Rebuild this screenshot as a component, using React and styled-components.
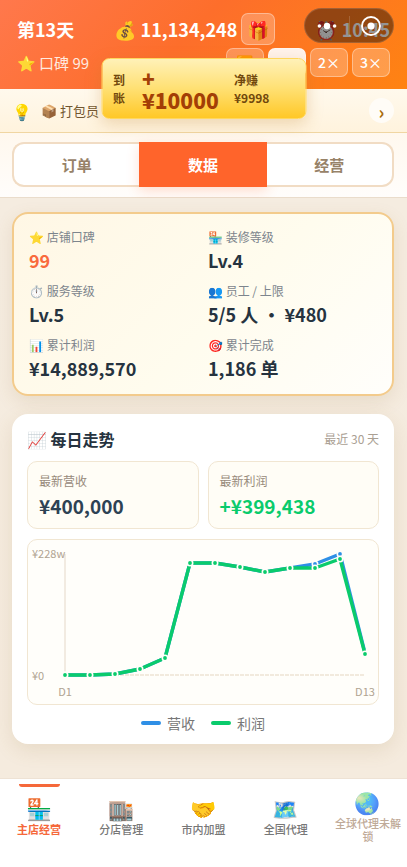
import React from "react";
import styled, { createGlobalStyle, css } from "styled-components";

const GlobalStyle = createGlobalStyle`
  *, *::before, *::after { box-sizing: border-box; }
  body {
    margin: 0;
    background: #f4eadd;
    font-family: "Noto Sans CJK SC", "Noto Color Emoji", sans-serif;
    color: #26333f;
  }
  button { font-family: inherit; margin: 0; cursor: pointer; }
  h2, p, dl, dd, dt { margin: 0; }
`;

const Screen = styled.div`
  position: relative;
  display: flex;
  flex-direction: column;
  min-height: 100vh;
`;

const Header = styled.header`
  display: flex;
  flex-direction: column;
  gap: 3px;
  padding: 13px 17px;
  color: #fff;
  background: linear-gradient(135deg, #ff784c 0%, #fd6e2b 45%, #ff8312 100%);
`;

const HeaderRow = styled.div`
  display: flex;
  align-items: center;
  justify-content: space-between;
  height: ${(p) => (p.$compact ? 28 : 32)}px;
`;

const Day = styled.strong`
  font-size: 18px;
  font-weight: 700;
`;

const Money = styled.div`
  display: flex;
  align-items: center;
  gap: 4px;
  font-size: 18px;
  font-weight: 700;
`;

const Clock = styled.time`
  font-size: 18px;
  font-weight: 700;
`;

const Reputation = styled.span`
  font-size: 15px;
  color: #ffe9df;
`;

const Speeds = styled.div`
  display: flex;
  gap: 4px;
`;

const GlassButton = styled.button`
  display: flex;
  align-items: center;
  justify-content: center;
  width: ${(p) => (p.$square ? 34 : 38)}px;
  height: ${(p) => (p.$square ? 32 : 29)}px;
  padding: 0;
  border: 1px solid rgba(255, 255, 255, 0.35);
  border-radius: 7px;
  background: ${(p) => (p.$active ? "#fff3ec" : "rgba(255, 255, 255, 0.23)")};
  color: ${(p) => (p.$active ? "#ff6b35" : "#fff")};
  font-size: ${(p) => (p.$square ? 18 : 14)}px;
  font-weight: ${(p) => (p.$square ? 700 : 500)};
`;

const Capsule = styled.div`
  position: absolute;
  top: 8px;
  right: 13px;
  display: grid;
  grid-template-columns: 1fr 1px 1fr;
  align-items: center;
  justify-items: center;
  width: 90px;
  height: 35px;
  border: 1px solid rgba(255, 255, 255, 0.14);
  border-radius: 18px;
  background: rgba(0, 0, 0, 0.42);
`;

const CapsuleButton = styled.button`
  display: flex;
  padding: 0;
  border: 0;
  background: none;
`;

const CapsuleDivider = styled.span`
  width: 1px;
  height: 20px;
  background: rgba(255, 255, 255, 0.16);
`;

const Toast = styled.div`
  position: absolute;
  top: 58px;
  left: 50%;
  transform: translateX(-50%);
  display: flex;
  align-items: center;
  gap: 16px;
  width: 205px;
  height: 61px;
  padding: 0 11px;
  border: 1px solid #ffd75e;
  border-radius: 8px;
  background: linear-gradient(180deg, #fff1b8 0%, #ffe073 50%, #ffc827 100%);
  box-shadow: 0 5px 16px rgba(190, 130, 40, 0.28);
  color: #71480c;
  font-weight: 700;
`;

const ToastLabel = styled.span`
  width: 13px;
  font-size: 12px;
  line-height: 18px;
`;

const ToastAmount = styled.strong`
  display: flex;
  flex-direction: column;
  width: 76px;
  color: #a33f06;
  font-size: 21px;
  line-height: 22px;
`;

const ToastNet = styled.span`
  display: flex;
  flex-direction: column;
  font-size: 12px;
  line-height: 18px;
`;

const Notice = styled.div`
  display: flex;
  align-items: center;
  gap: 9px;
  height: 44px;
  padding: 0 13px 0 12px;
  border-bottom: 1px solid #f0d6a2;
  background: linear-gradient(180deg, #fff9ed, #fff3dd);
  color: #715630;
`;

const NoticeIcon = styled.span`
  font-size: 16px;
`;

const NoticeText = styled.span`
  flex: 1;
  font-size: 13px;
`;

const NoticeButton = styled.button`
  display: flex;
  align-items: center;
  justify-content: center;
  width: 25px;
  height: 25px;
  padding: 0;
  border: 0;
  border-radius: 50%;
  background: #fffcf7;
  color: #a96b08;
  font-size: 18px;
  line-height: 24px;
  font-weight: 700;
`;

const TabBar = styled.div`
  padding: 9px 13px 10px 12px;
  border-bottom: 1px solid #eadccb;
  background: linear-gradient(180deg, #fff8ee, #fffdfb);
`;

const TabList = styled.div`
  display: grid;
  grid-template-columns: repeat(3, 1fr);
`;

const Tab = styled.button`
  height: 45px;
  padding: 0;
  border: 2px solid #f1dcc4;
  background: #fff;
  color: #978268;
  font-size: 15px;
  font-weight: 700;
  &:first-child { border-right: 0; border-radius: 12px 0 0 12px; }
  &:last-child { border-left: 0; border-radius: 0 12px 12px 0; }
  ${(p) => p.$active && css`
    border-color: #ff642b;
    background: #ff642b;
    color: #fff;
    box-shadow: 0 4px 12px rgba(255, 100, 43, 0.2);
  `}
`;

const Content = styled.main`
  display: flex;
  flex: 1;
  flex-direction: column;
  gap: 18px;
  padding: 14px 13px 34px 12px;
  background: linear-gradient(180deg, #f5ece0, #f5ebde);
`;

const StatsCard = styled.dl`
  display: grid;
  grid-template-columns: 1fr 1fr;
  gap: 6px 10px;
  padding: 12px 15px;
  border: 2px solid #f3cb8c;
  border-radius: 16px;
  background: linear-gradient(135deg, #fff7e5 0%, #fffcee 55%, #fffefb 100%);
  box-shadow: 0 6px 18px rgba(150, 110, 50, 0.13);
`;

const StatLabel = styled.dt`
  color: #7d858d;
  font-size: 12px;
  line-height: 21px;
`;

const StatValue = styled.dd`
  color: ${(p) => (p.$accent ? "#f96a3c" : "#26333f")};
  font-size: 18px;
  font-weight: 700;
  line-height: 27px;
`;

const TrendCard = styled.section`
  display: flex;
  flex-direction: column;
  gap: 10px;
  padding: 12px 15px 13px;
  border-radius: 16px;
  background: #fff;
  box-shadow: 0 6px 20px rgba(150, 110, 50, 0.14);
`;

const TrendHead = styled.div`
  display: flex;
  align-items: center;
  justify-content: space-between;
  height: 25px;
`;

const TrendTitle = styled.h2`
  font-size: 16px;
  font-weight: 700;
`;

const TrendRange = styled.span`
  color: #aaa093;
  font-size: 12px;
`;

const Figures = styled.div`
  display: grid;
  grid-template-columns: 1fr 1fr;
  gap: 9px;
`;

const Figure = styled.div`
  padding: 9px 11px 8px;
  border: 1px solid #f1e6d2;
  border-radius: 10px;
  background: #fffdf6;
`;

const FigureLabel = styled.p`
  color: #978a7b;
  font-size: 12px;
  line-height: 20px;
`;

const FigureValue = styled.p`
  color: ${(p) => (p.$profit ? "#0acb6c" : "#2d4254")};
  font-size: 19px;
  font-weight: 700;
  line-height: 29px;
`;

const ChartBox = styled.div`
  border: 1px solid #f1e6d2;
  border-radius: 10px;
  background: #fffefa;
`;

const ChartSvg = styled.svg`
  display: block;
  width: 100%;
  text {
    fill: #b0a391;
    font-size: 11px;
  }
`;

const Legend = styled.div`
  display: flex;
  justify-content: center;
  gap: 16px;
  line-height: 16px;
`;

const LegendItem = styled.span`
  display: flex;
  align-items: center;
  gap: 6px;
  color: #777;
  font-size: 14px;
  &::before {
    content: "";
    width: 20px;
    height: 4px;
    border-radius: 2px;
    background: ${(p) => p.$color};
  }
`;

const BottomNav = styled.nav`
  position: sticky;
  bottom: 0;
  overflow: hidden;
  padding: 5px 0 18px;
  border-top: 1px solid #eee2d4;
  background: #fff;
`;

const NavList = styled.div`
  display: grid;
  grid-template-columns: repeat(5, 1fr);
  height: 65px;
  margin: 0 -2px;
`;

const NavItem = styled.button`
  position: relative;
  display: flex;
  flex-direction: column;
  align-items: center;
  justify-content: center;
  min-width: 0;
  padding: 0 6px;
  border: 0;
  background: none;
  color: ${(p) => (p.$active ? "#f5683a" : p.$locked ? "#bfaa98" : "#777")};
  font-size: 11px;
  font-weight: ${(p) => (p.$active ? 700 : 500)};
  line-height: 13px;
  ${(p) => p.$active && css`
    &::before {
      content: "";
      position: absolute;
      top: 0;
      left: 25%;
      width: 50%;
      height: 3px;
      border-radius: 0 0 3px 3px;
      background: #f5683a;
    }
  `}
`;

const NavIcon = styled.span`
  font-family: "Noto Color Emoji", sans-serif;
  font-size: 21px;
  line-height: 26px;
  opacity: ${(p) => (p.$locked ? 0.75 : 1)};
`;

const STATS = [
  { label: "⭐ 店铺口碑", value: "99", accent: true },
  { label: "🏪 装修等级", value: "Lv.4" },
  { label: "⏱️ 服务等级", value: "Lv.5" },
  { label: "👥 员工 / 上限", value: "5/5 人 · ¥480" },
  { label: "📊 累计利润", value: "¥14,889,570" },
  { label: "🎯 累计完成", value: "1,186 单" },
];

const NAV = [
  { icon: "🏪", label: "主店经营", active: true },
  { icon: "🏬", label: "分店管理" },
  { icon: "🤝", label: "市内加盟" },
  { icon: "🗺️", label: "全国代理" },
  { icon: "🌏", label: "全球代理未解锁", locked: true },
];

const PROFIT = [135, 135, 134, 129, 118, 23, 23, 27, 32, 28, 28, 19, 114];
const REVENUE = [135, 135, 134, 129, 118, 23, 23, 27, 32, 28, 24, 14, 113];
const toPoints = (values) => values.map((y, i) => [37 + i * 25, y]);

function Series({ values, color }) {
  const points = toPoints(values);
  return (
    <g>
      <polyline points={points.join(" ")} fill="none" stroke={color} strokeWidth="3.4" strokeLinejoin="round" />
      {points.map(([x, y]) => (
        <circle key={x} cx={x} cy={y} r="2.7" fill={color} stroke="#fffefa" strokeWidth="1.6" />
      ))}
    </g>
  );
}

function TrendChart() {
  return (
    <ChartSvg viewBox="0 0 350 164" role="img" aria-label="每日走势">
      <path d="M37 14V135" stroke="#eee5d8" strokeWidth="1.5" />
      <path d="M37 135H337" stroke="#eee3d4" strokeWidth="1.5" strokeDasharray="4 1" />
      <text x="4" y="18">¥228w</text>
      <text x="4" y="140">¥0</text>
      <text x="37" y="156" textAnchor="middle">D1</text>
      <text x="337" y="156" textAnchor="middle">D13</text>
      <Series values={REVENUE} color="#2f8fe6" />
      <Series values={PROFIT} color="#0acb6c" />
    </ChartSvg>
  );
}

export default function App() {
  return (
    <Screen>
      <GlobalStyle />
      <Header>
        <HeaderRow>
          <Day>第13天</Day>
          <Money>
            <span>💰 11,134,248</span>
            <GlassButton $square aria-label="礼物">🎁</GlassButton>
          </Money>
          <Clock>⏰ 10:45</Clock>
        </HeaderRow>
        <HeaderRow $compact>
          <Reputation>⭐ 口碑 99</Reputation>
          <Speeds>
            <GlassButton aria-label="暂停">⏸️</GlassButton>
            <GlassButton $active>1×</GlassButton>
            <GlassButton>2×</GlassButton>
            <GlassButton>3×</GlassButton>
          </Speeds>
        </HeaderRow>
      </Header>
      <Notice>
        <NoticeIcon>💡</NoticeIcon>
        <NoticeText>📦 打包员</NoticeText>
        <NoticeButton aria-label="展开">›</NoticeButton>
      </Notice>
      <TabBar>
        <TabList role="tablist">
          <Tab role="tab" aria-selected="false">订单</Tab>
          <Tab role="tab" aria-selected="true" $active>数据</Tab>
          <Tab role="tab" aria-selected="false">经营</Tab>
        </TabList>
      </TabBar>
      <Content>
        <StatsCard>
          {STATS.map((s) => (
            <div key={s.label}>
              <StatLabel>{s.label}</StatLabel>
              <StatValue $accent={s.accent}>{s.value}</StatValue>
            </div>
          ))}
        </StatsCard>
        <TrendCard>
          <TrendHead>
            <TrendTitle>📈 每日走势</TrendTitle>
            <TrendRange>最近 30 天</TrendRange>
          </TrendHead>
          <Figures>
            <Figure>
              <FigureLabel>最新营收</FigureLabel>
              <FigureValue>¥400,000</FigureValue>
            </Figure>
            <Figure>
              <FigureLabel>最新利润</FigureLabel>
              <FigureValue $profit>+¥399,438</FigureValue>
            </Figure>
          </Figures>
          <ChartBox>
            <TrendChart />
          </ChartBox>
          <Legend>
            <LegendItem $color="#2f8fe6">营收</LegendItem>
            <LegendItem $color="#0acb6c">利润</LegendItem>
          </Legend>
        </TrendCard>
      </Content>
      <BottomNav>
        <NavList>
          {NAV.map((n) => (
            <NavItem key={n.label} $active={n.active} $locked={n.locked}>
              <NavIcon $locked={n.locked}>{n.icon}</NavIcon>
              {n.label}
            </NavItem>
          ))}
        </NavList>
      </BottomNav>
      <Toast role="status">
        <ToastLabel>到账</ToastLabel>
        <ToastAmount>
          <span>+</span>
          <span>¥10000</span>
        </ToastAmount>
        <ToastNet>
          <span>净赚</span>
          <span>¥9998</span>
        </ToastNet>
      </Toast>
      <Capsule>
        <CapsuleButton aria-label="更多">
          <svg width="20" height="8" viewBox="0 0 20 8" fill="#fff">
            <circle cx="2.4" cy="4" r="1.8" />
            <circle cx="10" cy="4" r="3.2" />
            <circle cx="17.6" cy="4" r="1.8" />
          </svg>
        </CapsuleButton>
        <CapsuleDivider />
        <CapsuleButton aria-label="关闭">
          <svg width="22" height="22" viewBox="0 0 22 22">
            <circle cx="11" cy="11" r="9" fill="none" stroke="#fff" strokeWidth="2" />
            <circle cx="11" cy="11" r="3.6" fill="#fff" />
          </svg>
        </CapsuleButton>
      </Capsule>
    </Screen>
  );
}
